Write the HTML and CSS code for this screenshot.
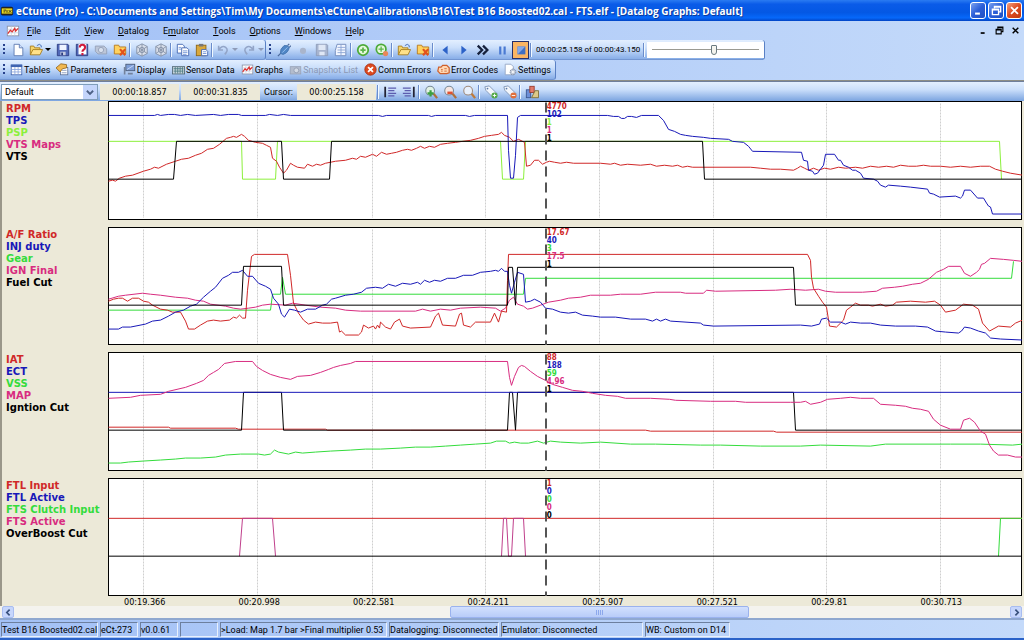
FILE: index.html
```html
<!DOCTYPE html>
<html lang="en">
<head>
    <meta charset="UTF-8">
    <meta name="viewport" content="width=device-width, initial-scale=1.0">
    <title>eCtune (Pro)</title>
    <link rel="stylesheet" href="styles.css">
</head>
<body>

<!-- icon set -->
<svg class="sprite" aria-hidden="true">
  <symbol id="i-app" viewBox="0 0 16 16"><rect x="1" y="3" width="14" height="10" rx="2" fill="#222"/><rect x="2" y="5" width="12" height="6" fill="#e8d820"/><path d="M4 7h3M4 9h2M8 7v3M10 7l3 3M13 7l-3 3" stroke="#222"/></symbol>
  <symbol id="i-chart" viewBox="0 0 16 16"><rect x="1.500" y="2.500" width="13" height="11" fill="#fff" stroke="#8a93a8"/><path d="M2 6h12M2 10h12M6 3v10M10 3v10" stroke="#cfd6e4"/><path d="M2 11l3-4 2 2 3-4 1 3 3-3" fill="none" stroke="#d33" stroke-width="1.500"/></symbol>
  <symbol id="i-new" viewBox="0 0 16 16"><path d="M3.500 1.500h6l4 4v9h-10z" fill="#fff" stroke="#5a78b0"/><path d="M9.500 1.500v4h4" fill="#cfe0ff" stroke="#5a78b0"/></symbol>
  <symbol id="i-open" viewBox="0 0 16 16"><path d="M1.500 13.500v-10h4l1 2h6v2" fill="#f6d46a" stroke="#a67c1c"/><path d="M1.500 13.500l3-6h11l-3 6z" fill="#ffe28a" stroke="#a67c1c"/><path d="M9 3q3-3 5 0v2" fill="none" stroke="#3a66b0"/></symbol>
  <symbol id="i-save" viewBox="0 0 16 16"><path d="M1.500 1.500h12l1 1v12h-13z" fill="#5068b8" stroke="#2b3c80"/><rect x="4" y="2" width="8" height="6" fill="#eef3ff"/><rect x="5" y="10" width="6" height="4" fill="#c4cbe0"/><rect x="6" y="11" width="2" height="3" fill="#2b3c80"/></symbol>
  <symbol id="i-saveoff" viewBox="0 0 16 16"><path d="M1.500 1.500h12l1 1v12h-13z" fill="#a7b4cf" stroke="#8e9bb8"/><rect x="4" y="2" width="8" height="6" fill="#dfe7f5"/><rect x="5" y="10" width="6" height="4" fill="#dfe7f5"/></symbol>
  <symbol id="i-saveas" viewBox="0 0 16 16"><path d="M1.500 1.500h13v13h-13z" fill="#5068b8" stroke="#2b3c80"/><rect x="4" y="1" width="9" height="12" fill="#fff"/><path d="M5.500 5q0-3 3-3t3 3q0 1.500-1.500 2.500T8.500 10M8.500 11.500v2.500" fill="none" stroke="#d01c3c" stroke-width="2.400"/></symbol>
  <symbol id="i-upload" viewBox="0 0 16 16"><path d="M1.500 3.500h10l3 3v6h-10l-3-3z" fill="#bcc6d8" stroke="#93a0b8"/><circle cx="8" cy="8" r="3" fill="#d8e0ee" stroke="#93a0b8"/></symbol>
  <symbol id="i-close" viewBox="0 0 16 16"><path d="M1.500 12.500v-10h5l1 2h7v8z" fill="#ffd25e" stroke="#b5761a"/><path d="M8 7l6 7M14 7l-6 7" stroke="#e2521c" stroke-width="2.500"/></symbol>
  <symbol id="i-wheel" viewBox="0 0 16 16"><path d="M8 1l6 3v8l-6 3-6-3V4z" fill="#d9dfea" stroke="#8490a6"/><circle cx="8" cy="8" r="3" fill="none" stroke="#8490a6"/><path d="M8 1v14M2 4l12 8M14 4L2 12" stroke="#8490a6"/></symbol>
  <symbol id="i-copy" viewBox="0 0 16 16"><path d="M1.500 1.500h6l2 2v8h-8z" fill="#fff" stroke="#3f64b0"/><path d="M6.500 5.500h6l2 2v7h-8z" fill="#fff" stroke="#3f64b0"/><path d="M3 5h3M3 7h3M8 9h5M8 11h5M8 13h4" stroke="#6f92d6"/></symbol>
  <symbol id="i-paste" viewBox="0 0 16 16"><rect x="1.500" y="2.500" width="11" height="12" fill="#d9a83c" stroke="#8c6414"/><rect x="4.500" y="1" width="5" height="3" fill="#777"/><path d="M7.500 7.500h5l2 2v5h-7z" fill="#fff" stroke="#3f64b0"/><path d="M9 10h4M9 12h4" stroke="#6f92d6"/></symbol>
  <symbol id="i-undo" viewBox="0 0 16 16"><path d="M3 3v5h5M3 8q4-6 8-3t-1 8" fill="none" stroke="#93a5c8" stroke-width="1.800"/></symbol>
  <symbol id="i-redo" viewBox="0 0 16 16"><path d="M13 3v5H8M13 8Q9 2 5 5t1 8" fill="none" stroke="#93a5c8" stroke-width="1.800"/></symbol>
  <symbol id="i-plug" viewBox="0 0 16 16"><path d="M1 15l4-4M12 3l2-2M14 5l2-2" stroke="#4c6a9c" stroke-width="1.500"/><path d="M4 12Q3 7 8 3q4-1 6 2-1 6-7 8z" fill="#4f86c6" stroke="#4474ae"/><path d="M6 11l6-6" stroke="#9cc4f0"/></symbol>
  <symbol id="i-dot" viewBox="0 0 16 16"><circle cx="8" cy="9" r="3.500" fill="#a9b5cc"/></symbol>
  <symbol id="i-sheet" viewBox="0 0 16 16"><path d="M3.500 1.500h10v13h-12v-6z" fill="#f2f6ff" stroke="#6b86b8"/><path d="M4 5h9M4 8h9M4 11h9M8 2v12" stroke="#8aa4d4"/></symbol>
  <symbol id="i-ring" viewBox="0 0 16 16"><circle cx="8" cy="8" r="6" fill="#e6f8dc" stroke="#4caa38" stroke-width="2"/><path d="M8 5v6M5 8h6" stroke="#5cb44a" stroke-width="2"/></symbol>
  <symbol id="i-ringx" viewBox="0 0 16 16"><circle cx="7" cy="7" r="5.500" fill="#e6f8dc" stroke="#4caa38" stroke-width="2"/><path d="M7 4v6M4 7h6" stroke="#5cb44a" stroke-width="1.500"/><circle cx="12" cy="12" r="3" fill="#e8875a"/></symbol>
  <symbol id="i-prev" viewBox="0 0 16 16"><path d="M11 3v10L5 8z" fill="#2c62c8"/></symbol>
  <symbol id="i-next" viewBox="0 0 16 16"><path d="M5 3v10l6-5z" fill="#2c62c8"/></symbol>
  <symbol id="i-ff" viewBox="0 0 16 16"><path d="M2 3l5 5-5 5M8 3l5 5-5 5" fill="none" stroke="#16213c" stroke-width="2.600"/></symbol>
  <symbol id="i-pause" viewBox="0 0 16 16"><path d="M6 4v9M11 4v9" stroke="#4a7ad2" stroke-width="2.500"/></symbol>
  <symbol id="i-stop" viewBox="0 0 16 16"><rect x="4" y="4" width="9" height="9" fill="#3e6fc4"/><path d="M4 4h9l-9 9z" fill="#86a8e6"/></symbol>
  <symbol id="i-table" viewBox="0 0 16 16"><rect x="1.500" y="2.500" width="13" height="12" fill="#fff" stroke="#3f64b0"/><rect x="1" y="2" width="14" height="3" fill="#3f64b0"/><path d="M2 8h12M2 11h12M6 5v9M10 5v9" stroke="#88a4dc"/></symbol>
  <symbol id="i-param" viewBox="0 0 16 16"><rect x="5.500" y="5.500" width="9" height="9" fill="#fff" stroke="#5b6f96"/><path d="M7 9h6M7 12h6" stroke="#7d90b6"/><path d="M0 6l6-5 7 1v4l-5 1-3 4z" fill="#f1b850" stroke="#93641a"/></symbol>
  <symbol id="i-display" viewBox="0 0 16 16"><rect x="3.500" y="1.500" width="11" height="8" fill="#7f9fd8" stroke="#44546e"/><path d="M5 8l8-5" stroke="#d5e4ff"/><path d="M6 12h6v2H6zM1 5h2v9H1z" fill="#73829c"/></symbol>
  <symbol id="i-sensor" viewBox="0 0 16 16"><rect x=".500" y="4.500" width="15" height="9" fill="#c8d4dc" stroke="#4c6470"/><path d="M2 7h12M2 10h12M4 5v8M7 5v8M10 5v8M13 5v8" stroke="#4a7a80"/></symbol>
  <symbol id="i-camera" viewBox="0 0 16 16"><rect x="1.500" y="4.500" width="13" height="9" fill="#b3bccd" stroke="#98a3b8"/><circle cx="9" cy="9" r="3" fill="#d3dae6" stroke="#8f9ab0"/></symbol>
  <symbol id="i-error" viewBox="0 0 16 16"><circle cx="8" cy="8" r="7" fill="#dd4a20" stroke="#a42c10"/><path d="M5 5l6 6M11 5l-6 6" stroke="#fff" stroke-width="2.200"/></symbol>
  <symbol id="i-engine" viewBox="0 0 16 16"><path d="M2 5h3l2-2h5l3 3v6l-3 1H4l-3-3z" fill="#ffd8b4" stroke="#d0602a" stroke-width="1.500"/><path d="M5 8h2M5 10h2M9 7h3M9 10h3" stroke="#d0602a"/></symbol>
  <symbol id="i-gear" viewBox="0 0 16 16"><path d="M1.500 1.500h7l3 3v10h-10z" fill="#fff" stroke="#8fa0c0"/><circle cx="11" cy="11" r="3.500" fill="#c4ccda" stroke="#6c7a94" stroke-dasharray="2 1"/><circle cx="11" cy="11" r="1.200" fill="#fff"/></symbol>
  <symbol id="i-left" viewBox="0 0 16 16"><path d="M2.500 2v12" stroke="#223" stroke-width="2"/><path d="M6 3.500h9M6 6.500h7M6 9.500h9M6 12.500h7" stroke="#5c5cae" stroke-width="1.500"/></symbol>
  <symbol id="i-right" viewBox="0 0 16 16"><path d="M13.500 2v12" stroke="#223" stroke-width="2"/><path d="M1 3.500h9M3 6.500h7M1 9.500h9M3 12.500h7" stroke="#5c5cae" stroke-width="1.500"/></symbol>
  <symbol id="i-zoomin" viewBox="0 0 16 16"><circle cx="7" cy="6.500" r="5" fill="#e2f2e6" stroke="#7a8a96" stroke-width="1.200"/><path d="M11 10l4 5" stroke="#b0703a" stroke-width="2.500"/><path d="M7.500 6v7M4 9.500h7" stroke="#3aa040" stroke-width="2.500"/></symbol>
  <symbol id="i-zoomout" viewBox="0 0 16 16"><circle cx="7" cy="6.500" r="5" fill="#f6e6e2" stroke="#7a8a96" stroke-width="1.200"/><path d="M11 10l4 5" stroke="#b0703a" stroke-width="2.500"/><path d="M5 9h6" stroke="#e05030" stroke-width="3"/></symbol>
  <symbol id="i-zoom" viewBox="0 0 16 16"><circle cx="7" cy="6.500" r="5" fill="#e8f0fc" stroke="#a08a7a" stroke-width="1.200"/><path d="M11 10l4 5" stroke="#c07a3a" stroke-width="2.500"/></symbol>
  <symbol id="i-tagadd" viewBox="0 0 16 16"><path d="M1 2l5-1 9 9-5 4-8-8z" fill="#f2f6fc" stroke="#7f93b4"/><circle cx="4" cy="4" r="1" fill="#5878a8"/><circle cx="12" cy="12" r="3.500" fill="#54a848"/><path d="M12 10v4M10 12h4" stroke="#fff"/></symbol>
  <symbol id="i-tagdel" viewBox="0 0 16 16"><path d="M1 2l5-1 9 9-5 4-8-8z" fill="#f2f6fc" stroke="#7f93b4"/><circle cx="4" cy="4" r="1" fill="#5878a8"/><circle cx="12" cy="12" r="3.500" fill="#e0703c"/><path d="M10 12h4" stroke="#fff"/></symbol>
  <symbol id="i-shapes" viewBox="0 0 16 16"><rect x="1.500" y="5.500" width="5" height="9" fill="#6c8fd8" stroke="#39558e"/><rect x="5.500" y="1.500" width="5" height="7" fill="#e07a6a" stroke="#9a3a2c"/><path d="M7.500 14.500l4-8h4v8z" fill="#dcc988" stroke="#7a6a30"/></symbol>
  <symbol id="i-restore" viewBox="0 0 16 16"><path d="M5 5V2h9v8h-3M5 3h9" fill="none" stroke="currentColor" stroke-width="2"/><path d="M2 6h9v8H2zM2 7h9" fill="none" stroke="currentColor" stroke-width="2"/></symbol>
  <symbol id="i-min" viewBox="0 0 16 16"><path d="M3 12.500h7" stroke="currentColor" stroke-width="3"/></symbol>
  <symbol id="i-x" viewBox="0 0 16 16"><path d="M3 3l10 10M13 3L3 13" stroke="currentColor" stroke-width="2.600"/></symbol>
  <symbol id="i-chevl" viewBox="0 0 16 16"><path d="M10 3L5 8l5 5" fill="none" stroke="currentColor" stroke-width="3"/></symbol>
  <symbol id="i-chevr" viewBox="0 0 16 16"><path d="M6 3l5 5-5 5" fill="none" stroke="currentColor" stroke-width="3"/></symbol>
  <symbol id="i-chevd" viewBox="0 0 16 16"><path d="M3 6l5 5 5-5" fill="none" stroke="currentColor" stroke-width="3"/></symbol>
</svg>

<div class="window">

  <header class="titlebar">
    <svg class="icon"><use href="#i-app"/></svg>
    <h1>eCtune (Pro) - C:\Documents and Settings\Tim\My Documents\eCtune\Calibrations\B16\Test B16 Boosted02.cal - FTS.elf - [Datalog Graphs: Default]</h1>
    <button class="winbtn" aria-label="Minimize"><svg class="icon"><use href="#i-min"/></svg></button>
    <button class="winbtn" aria-label="Restore"><svg class="icon"><use href="#i-restore"/></svg></button>
    <button class="winbtn winbtn-close" aria-label="Close"><svg class="icon"><use href="#i-x"/></svg></button>
  </header>

  <div class="bars">
    <nav class="menubar">
      <svg class="icon"><use href="#i-chart"/></svg>
      <button><u>F</u>ile</button>
      <button><u>E</u>dit</button>
      <button><u>V</u>iew</button>
      <button><u>D</u>atalog</button>
      <button>E<u>m</u>ulator</button>
      <button><u>T</u>ools</button>
      <button><u>O</u>ptions</button>
      <button><u>W</u>indows</button>
      <button><u>H</u>elp</button>
      <div class="childbtns">
        <button aria-label="Minimize child"><svg class="icon-s"><use href="#i-min"/></svg></button>
        <button aria-label="Restore child"><svg class="icon-s"><use href="#i-restore"/></svg></button>
        <button aria-label="Close child"><svg class="icon-s"><use href="#i-x"/></svg></button>
      </div>
    </nav>

    <div class="row">
      <div class="toolbar">
        <i class="grip"></i>
        <button class="tool" aria-label="New"><svg class="icon"><use href="#i-new"/></svg></button>
        <button class="tool split" aria-label="Open"><svg class="icon"><use href="#i-open"/></svg><i class="caret"></i></button>
        <button class="tool" aria-label="Save"><svg class="icon"><use href="#i-save"/></svg></button>
        <button class="tool" aria-label="Save as"><svg class="icon"><use href="#i-saveas"/></svg></button>
        <button class="tool" aria-label="Upload" disabled><svg class="icon"><use href="#i-upload"/></svg></button>
        <button class="tool" aria-label="Close file"><svg class="icon"><use href="#i-close"/></svg></button>
        <i class="sep"></i>
        <button class="tool" aria-label="Table up"><svg class="icon"><use href="#i-wheel"/></svg></button>
        <button class="tool" aria-label="Table down"><svg class="icon"><use href="#i-wheel"/></svg></button>
        <i class="sep"></i>
        <button class="tool" aria-label="Copy"><svg class="icon"><use href="#i-copy"/></svg></button>
        <button class="tool" aria-label="Paste"><svg class="icon"><use href="#i-paste"/></svg></button>
        <i class="sep"></i>
        <button class="tool split" aria-label="Undo" disabled><svg class="icon"><use href="#i-undo"/></svg><i class="caret"></i></button>
        <button class="tool split" aria-label="Redo" disabled><svg class="icon"><use href="#i-redo"/></svg><i class="caret"></i></button>
      </div>
      <div class="toolbar">
        <i class="grip"></i>
        <button class="tool" aria-label="Connect"><svg class="icon"><use href="#i-plug"/></svg></button>
        <button class="tool" aria-label="Record" disabled><svg class="icon"><use href="#i-dot"/></svg></button>
        <button class="tool" aria-label="Save log" disabled><svg class="icon"><use href="#i-saveoff"/></svg></button>
        <button class="tool" aria-label="Log sheet"><svg class="icon"><use href="#i-sheet"/></svg></button>
        <i class="sep"></i>
        <button class="tool" aria-label="Start"><svg class="icon"><use href="#i-ring"/></svg></button>
        <button class="tool" aria-label="Clear"><svg class="icon"><use href="#i-ringx"/></svg></button>
        <i class="sep"></i>
        <button class="tool" aria-label="Open log"><svg class="icon"><use href="#i-open"/></svg></button>
        <button class="tool" aria-label="Close log"><svg class="icon"><use href="#i-close"/></svg></button>
        <i class="sep"></i>
        <button class="tool" aria-label="Back"><svg class="icon"><use href="#i-prev"/></svg></button>
        <button class="tool" aria-label="Play"><svg class="icon"><use href="#i-next"/></svg></button>
        <button class="tool" aria-label="Fast forward"><svg class="icon"><use href="#i-ff"/></svg></button>
        <button class="tool" aria-label="Pause"><svg class="icon"><use href="#i-pause"/></svg></button>
        <button class="tool active" aria-label="Stop"><svg class="icon"><use href="#i-stop"/></svg></button>
        <i class="sep"></i>
        <span class="playtime">00:00:25.158 of 00:00:43.150</span>
        <i class="sep"></i>
        <input class="seek" type="range" min="0" max="43150" value="25158" aria-label="Playback position">
      </div>
    </div>

    <div class="row">
      <div class="toolbar labelled">
        <i class="grip"></i>
        <button><svg class="icon"><use href="#i-table"/></svg>Tables</button>
        <button><svg class="icon"><use href="#i-param"/></svg>Parameters</button>
        <button><svg class="icon"><use href="#i-display"/></svg>Display</button>
        <button><svg class="icon"><use href="#i-sensor"/></svg>Sensor Data</button>
        <button><svg class="icon"><use href="#i-chart"/></svg>Graphs</button>
        <button disabled><svg class="icon"><use href="#i-camera"/></svg>Snapshot List</button>
        <button><svg class="icon"><use href="#i-error"/></svg>Comm Errors</button>
        <button><svg class="icon"><use href="#i-engine"/></svg>Error Codes</button>
        <button><svg class="icon"><use href="#i-gear"/></svg>Settings</button>
      </div>
    </div>
  </div>

  <div class="graphbar">
    <label class="picker">
      <select aria-label="Graph layout"><option>Default</option></select>
      <svg class="icon"><use href="#i-chevd"/></svg>
    </label>
    <output>00:00:18.857</output>
    <output>00:00:31.835</output>
    <span class="cursor-label">Cursor:</span>
    <output>00:00:25.158</output>
    <i class="sep"></i>
    <button class="tool" aria-label="Set start"><svg class="icon"><use href="#i-left"/></svg></button>
    <button class="tool" aria-label="Set end"><svg class="icon"><use href="#i-right"/></svg></button>
    <i class="sep"></i>
    <button class="tool" aria-label="Zoom in"><svg class="icon"><use href="#i-zoomin"/></svg></button>
    <button class="tool" aria-label="Zoom out"><svg class="icon"><use href="#i-zoomout"/></svg></button>
    <button class="tool" aria-label="Zoom all"><svg class="icon"><use href="#i-zoom"/></svg></button>
    <i class="sep"></i>
    <button class="tool" aria-label="Add tag"><svg class="icon"><use href="#i-tagadd"/></svg></button>
    <button class="tool" aria-label="Remove tag"><svg class="icon"><use href="#i-tagdel"/></svg></button>
    <i class="sep"></i>
    <button class="tool" aria-label="Graph options"><svg class="icon"><use href="#i-shapes"/></svg></button>
  </div>

  <main class="graphs">

    <section class="graph">
      <ul class="legend">
        <li class="red">RPM</li><li class="blue">TPS</li><li class="lime">PSP</li><li class="pink">VTS Maps</li><li class="black">VTS</li>
      </ul>
      <div class="plot">
        <svg viewBox="107.500 100.500 914 119" preserveAspectRatio="none">
          <path class="gridlines" d="M143 103V218M257 103V218M372 103V218M485 103V218M599 103V218M713 103V218M826 103V218M940 103V218"/>
          <polyline class="lime" points="108,141 241,141 242,179 275,179 277,141 500,141 502,179 523,179 525,141 999,141 1001,179"/>
          <polyline class="red" points="108,181 112,180 115,181 119,178 125,176 132,175 143,171 150,169 154,167 158,168 166,164 175,161 181,159 188,158 195,155 201,153 207,149 213,148 219,144 226,138 230,137 233,136 236,137 241,134 244,136 248,140 255,142 262,143 266,145 270,147 272,158 276,161 279,167 283,173 286,170 290,163 293,165 297,167 304,168 307,164 312,166 316,164 320,165 325,163 335,161 345,160 352,158 356,159 360,156 365,157 372,154 376,156 381,152 386,154 391,153 396,152 402,150 407,149 411,150 416,148 420,146 424,148 429,146 434,147 440,144 447,143 455,142 462,141 470,140 478,138 484,136 491,135 498,134 501,132 504,135 509,137 513,141 518,139 524,142 526,166 530,165 534,160 538,160 542,164 546,162 549,161 554,162 560,163 566,162 573,163 600,163 610,164 614,163 620,165 627,164 640,165 650,164 656,166 664,165 672,166 677,165 682,167 687,166 692,167 750,167 760,168 770,169 780,169 793,170 797,168 800,166 804,168 808,170 813,168 818,170 824,168 830,169 838,167 845,168 855,167 862,168 870,166 878,167 886,166 893,167 900,165 908,166 916,166 923,165 930,166 940,166 950,167 960,166 970,167 980,166 989,166 995,169 1002,171 1010,173 1022,175"/>
          <polyline class="blue" points="108,115 154,115 157,114 160,115 168,114 174,114 180,115 187,114 195,115 213,114 220,115 228,114 238,114 241,115 265,115 269,114 277,115 283,114 290,115 378,115 382,116 386,115 428,115 431,116 435,115 465,115 469,116 474,115 507,115 508,150 510,178 513,178 515,155 517,117 520,115 607,115 613,116 618,116 621,118 624,118 627,116 631,116 636,117 641,115 658,115 663,120 668,129 674,131 680,134 685,135 692,136 703,137 710,138 728,139 732,141 743,142 748,146 752,151 801,152 803,160 807,161 808,170 812,171 814,174 817,173 820,169 823,165 825,154 834,154 838,160 840,160 843,165 848,167 852,170 855,170 860,173 863,178 873,179 877,181 880,185 885,187 888,185 900,186 910,187 927,189 929,193 933,194 939,197 955,196 960,198 962,196 964,190 970,190 977,198 983,198 986,203 988,206 990,207 992,214 1022,214"/>
          <polyline class="black" points="108,179 173,179 176,141 281,141 283,179 329,179 331,141 702,141 704,179 1022,179"/>
          <path class="cursor" d="M545.500 102V219"/>
        </svg>
        <ul class="readout">
          <li class="red">4770</li><li class="blue">102</li><li class="lime">1</li><li class="pink">1</li><li class="black">1</li>
        </ul>
      </div>
    </section>

    <section class="graph">
      <ul class="legend">
        <li class="red">A/F Ratio</li><li class="blue">INJ duty</li><li class="green">Gear</li><li class="pink">IGN Final</li><li class="black">Fuel Cut</li>
      </ul>
      <div class="plot">
        <svg viewBox="107.500 226.500 914 119" preserveAspectRatio="none">
          <path class="gridlines" d="M143 229V344M257 229V344M372 229V344M485 229V344M599 229V344M713 229V344M826 229V344M940 229V344"/>
          <polyline class="green" points="108,310 270,310 272,294 280,294 282,277 285,294 523,294 525,278 1011,278 1013,261"/>
          <polyline class="pink" points="108,299 118,296 125,295 142,293 150,294 160,295 175,297 187,298 195,300 203,301 210,304 225,306 233,308 240,309 248,308 255,307 262,305 270,304 285,305 292,303 305,305 320,307 335,308 345,310 360,311 415,311 422,309 430,311 440,309 450,310 460,308 480,307 495,308 500,311 505,308 509,300 513,297 517,304 523,306 527,309 532,308 540,305 548,302 560,300 568,298 580,297 590,295 610,295 620,294 640,294 655,292 680,292 685,293 703,293 706,290 715,291 775,290 790,289 805,290 818,289 825,291 835,292 862,292 876,291 882,288 894,287 902,286 912,284 920,283 928,279 936,272 943,269 948,266 960,266 964,273 970,276 976,272 979,269 981,264 984,263 990,258 1003,259 1013,260 1022,261"/>
          <polyline class="red" points="108,301 113,299 118,298 122,298 127,301 132,298 138,298 143,301 148,302 152,305 160,309 167,310 172,312 180,312 185,321 188,329 194,329 200,325 207,321 213,320 220,321 229,320 233,317 236,318 239,315 242,318 245,318 247,290 251,256 254,254 287,254 290,275 293,303 298,313 303,320 308,324 315,322 322,323 330,323 337,322 339,332 341,331 345,335 358,335 361,332 363,325 368,328 373,326 375,329 377,325 379,328 380,322 385,327 390,329 394,322 399,319 402,326 410,328 430,327 435,316 438,313 442,325 455,326 459,314 461,313 463,325 470,327 475,322 490,322 494,313 498,322 501,311 506,312 507,280 508,254 807,254 810,260 811,277 813,288 818,296 822,302 826,307 829,326 836,327 843,320 846,310 850,307 855,303 860,305 868,305 872,306 880,304 885,306 892,305 896,302 910,301 925,302 934,301 940,305 945,312 955,310 963,304 972,305 978,309 982,323 989,331 998,326 1010,327 1015,323 1022,320"/>
          <polyline class="blue" points="108,329 118,329 122,327 130,327 145,324 152,321 160,320 168,316 175,312 183,310 190,306 196,304 203,297 210,291 215,287 222,278 228,275 232,272 238,272 242,270 247,276 252,276 258,283 265,286 270,289 273,298 278,304 281,314 284,317 289,309 294,310 300,312 307,309 315,309 322,305 326,304 331,299 335,298 345,295 353,294 361,292 366,288 375,287 382,288 388,284 395,286 402,283 410,284 417,282 420,284 424,280 429,282 434,280 440,281 447,278 455,278 463,275 472,275 480,272 490,271 495,270 498,271 501,268 504,271 507,271 509,285 511,293 514,282 517,272 523,274 525,302 530,301 534,299 540,302 545,308 552,309 560,312 568,313 575,312 582,315 592,316 600,317 615,317 630,319 645,319 652,321 656,319 660,321 665,319 670,321 700,323 703,325 713,326 800,325 811,326 819,324 821,319 826,318 830,322 840,322 845,324 850,322 860,323 870,323 880,325 895,326 915,326 927,327 935,331 945,332 958,333 961,331 964,327 970,328 978,331 985,333 990,338 1000,339 1022,340"/>
          <polyline class="black" points="108,305 241,305 243,266 281,266 283,305 507,305 508,267 512,267 515,305 517,267 793,267 795,305 1022,305"/>
          <path class="cursor" d="M545.500 228V345"/>
        </svg>
        <ul class="readout">
          <li class="red">17.67</li><li class="blue">40</li><li class="green">3</li><li class="pink">17.5</li><li class="black">1</li>
        </ul>
      </div>
    </section>

    <section class="graph">
      <ul class="legend">
        <li class="red">IAT</li><li class="blue">ECT</li><li class="green">VSS</li><li class="pink">MAP</li><li class="black">Igntion Cut</li>
      </ul>
      <div class="plot">
        <svg viewBox="107.500 351.500 914 119" preserveAspectRatio="none">
          <path class="gridlines" d="M143 355V469M257 355V469M372 355V469M485 355V469M599 355V469M713 355V469M826 355V469M940 355V469"/>
          <polyline class="green" points="108,463 120,463 128,462 143,461 160,460 175,459 185,458 200,458 215,457 225,455 240,454 258,454 264,455 270,454 274,450 278,452 288,454 295,452 302,453 315,452 330,451 350,450 365,449 380,449 400,448 415,447 430,447 445,446 460,445 475,444 490,443 496,441 505,441 509,443 514,442 520,443 528,443 537,441 543,443 550,441 560,442 580,443 600,442 630,444 655,444 700,445 720,445 760,446 800,446 820,445 870,446 885,444 950,444 980,444 1012,445 1022,444"/>
          <polyline class="red" points="108,427 168,427 170,428 235,428 238,429 325,429 327,430 410,430 645,430 650,431 773,431 776,432 1022,432"/>
          <polyline class="black" points="108,430 241,430 243,392 281,392 283,430 507,430 509,392 512,392 515,430 517,392 793,392 795,430 1022,430"/>
          <polyline class="blue" points="108,392 1022,392"/>
          <polyline class="pink" points="108,398 130,397 140,395 160,394 168,391 185,387 196,383 203,380 208,375 213,372 218,369 221,366 224,363 235,361 252,361 256,366 262,370 270,374 280,377 290,379 297,376 310,375 320,372 328,369 333,367 340,365 350,363 355,361 507,361 509,377 511,385 514,376 518,367 521,365 524,366 530,371 537,376 545,380 552,384 562,387 572,390 582,391 592,393 605,395 617,396 625,398 650,398 669,399 675,400 710,401 735,401 745,402 790,402 800,402 805,401 810,404 820,402 827,399 840,398 850,397 860,398 873,398 880,404 895,405 905,406 912,408 920,409 928,411 933,419 940,425 950,429 960,429 963,420 969,418 974,422 980,431 985,434 989,445 993,451 998,455 1007,455 1015,457 1022,457"/>
          <path class="cursor" d="M545.500 354V471"/>
        </svg>
        <ul class="readout">
          <li class="red">88</li><li class="blue">188</li><li class="green">59</li><li class="pink">4.96</li><li class="black">1</li>
        </ul>
      </div>
    </section>

    <section class="graph">
      <ul class="legend">
        <li class="red">FTL Input</li><li class="blue">FTL Active</li><li class="green">FTS Clutch Input</li><li class="pink">FTS Active</li><li class="black">OverBoost Cut</li>
      </ul>
      <div class="plot">
        <svg viewBox="107.500 477.500 914 119" preserveAspectRatio="none">
          <path class="gridlines" d="M143 480V595M257 480V595M372 480V595M485 480V595M599 480V595M713 480V595M826 480V595M940 480V595"/>
          <polyline class="red" points="108,518 1022,518"/>
          <polyline class="violet" points="239,556 242,518 272,518 275,556"/>
          <polyline class="violet" points="501,556 503,518 506,518 508,556 511,556 513,518 523,518 525,556"/>
          <polyline class="green" points="998,556 1000,518 1022,518"/>
          <polyline class="black" points="108,556 1022,556"/>
          <path class="cursor" d="M545.500 479V596"/>
        </svg>
        <ul class="readout">
          <li class="red">1</li><li class="blue">0</li><li class="green">0</li><li class="pink">0</li><li class="black">0</li>
        </ul>
      </div>
    </section>
  </main>

  <div class="axis">
    <span>00:19.366</span><span>00:20.998</span><span>00:22.581</span><span>00:24.211</span><span>00:25.907</span><span>00:27.521</span><span>00:29.81</span><span>00:30.713</span>
  </div>

  <div class="scrollbar">
    <button aria-label="Scroll left"><svg class="icon-s"><use href="#i-chevl"/></svg></button>
    <div class="track"><div class="thumb"></div></div>
    <button aria-label="Scroll right"><svg class="icon-s"><use href="#i-chevr"/></svg></button>
  </div>

  <footer class="statusbar">
    <span class="s-file">Test B16 Boosted02.cal</span>
    <span class="s-short">eCt-273</span>
    <span class="s-short">v0.0.61</span>
    <span class="s-short"></span>
    <span class="s-load">&gt;Load: Map 1.7 bar &gt;Final multiplier 0.53</span>
    <span class="s-log">Datalogging: Disconnected</span>
    <span class="s-emu">Emulator: Disconnected</span>
    <span class="s-wb">WB: Custom on D14</span>
  </footer>

</div>

</body>
</html>
```
FILE: styles.css
```css
* {
  box-sizing: border-box;
}

body {
  margin: 0;
  font-family: Roboto, sans-serif;
  font-size: 9px;
  color: #000;
}

button {
  display: flex;
  align-items: center;
  justify-content: center;
  padding: 0;
  border: 0;
  background: none;
  font: inherit;
  color: inherit;
  white-space: nowrap;
}

ul {
  margin: 0;
  padding: 0;
  list-style: none;
}

.sprite {
  position: absolute;
  width: 0;
  height: 0;
}

.icon {
  width: 14px;
  height: 14px;
  flex: none;
}

.icon-s {
  width: 9px;
  height: 9px;
}

.window {
  display: flex;
  flex-direction: column;
  height: 100vh;
  overflow: hidden;
  background: #ece9d8;
  border-bottom: 2px solid #2a62c8;
}

/* title bar */
.titlebar {
  display: flex;
  align-items: center;
  gap: 2px;
  height: 21px;
  padding: 0 2px 0 0;
  background: linear-gradient(#2a7bf2, #0a5be8 20%, #0458e4 60%, #0668fa 85%, #0244c4);
  color: #fff;
}

.titlebar h1 {
  flex: 1;
  margin: 0;
  font-family: "Open Sans", sans-serif;
  font-size: 10px;
  font-weight: 700;
  white-space: nowrap;
  text-shadow: 1px 1px 0 #0a3a9c;
}

.winbtn {
  width: 16px;
  height: 17px;
  border: 1px solid #fff;
  border-radius: 3px;
  background: linear-gradient(135deg, #7ba2f0, #2a5ed8 50%, #2050c0);
}

.winbtn .icon {
  width: 11px;
  height: 11px;
}

.winbtn-close {
  background: linear-gradient(135deg, #f0a080, #dc4a20 50%, #c03a10);
}

/* menus and toolbars */
.bars {
  background: linear-gradient(90deg, #a3c1f6, #c4dafa);
  border-bottom: 1px solid #8d8d85;
}

.menubar {
  display: flex;
  align-items: center;
  gap: 14px;
  height: 19px;
  padding: 0 4px 0 6px;
}

.menubar > .icon {
  margin-right: -7px;
}

.childbtns {
  display: flex;
  gap: 7px;
  margin-left: auto;
}

.row {
  display: flex;
  height: 20px;
}

.toolbar {
  display: flex;
  align-items: center;
  gap: 2px;
  padding-left: 2px;
  border-radius: 0 3px 3px 0;
  background: linear-gradient(#e3efff, #cbdffb 40%, #88aee8);
  border-right: 1px solid #5a80c4;
  border-bottom: 1px solid #7396d2;
}

.grip {
  width: 2px;
  height: 12px;
  margin: 0 2px 0 1px;
  background: repeating-linear-gradient(#27418c 0 2px, transparent 2px 4px);
}

.sep {
  flex: none;
  width: 2px;
  height: 14px;
  margin-left: -1px;
  border-left: 1px solid #6a8ccb;
  border-right: 1px solid #f1f9ff;
}

.tool {
  flex: none;
  width: 17px;
  height: 18px;
}

.split {
  width: 24px;
  gap: 2px;
}

.caret {
  border: 3px solid transparent;
  border-top-color: #000;
  border-bottom: 0;
}

.tool:disabled .caret {
  border-top-color: #8e9bb8;
}

.active {
  border: 1px solid #26306a;
  background: #fbb562;
}

.playtime {
  padding: 0 2px;
  font-size: 8px;
}

.seek {
  appearance: none;
  width: 117px;
  height: 16px;
  margin: 0;
  padding: 0 5px;
  background: #fff;
}

.seek::-webkit-slider-runnable-track {
  height: 1px;
  background: #9a9a92;
}

.seek::-webkit-slider-thumb {
  appearance: none;
  width: 6px;
  height: 10px;
  margin-top: -4px;
  border: 1px solid #6a7a80;
  border-radius: 1px 1px 3px 3px;
  background: #f4f4ee;
}

.labelled {
  gap: 6px;
  padding-right: 4px;
}

.labelled .grip {
  margin-right: -1px;
}

.labelled .icon {
  width: 13px;
  height: 13px;
}

.labelled button {
  gap: 1px;
}

.labelled button:disabled {
  color: #8c99b4;
}

/* graph toolbar */
.graphbar {
  display: flex;
  align-items: center;
  gap: 2px;
  height: 20px;
  padding-left: 1px;
  background: linear-gradient(#e3efff, #cbdffb 40%, #7ba4e0);
  border-top: 1px solid #6f7f9c;
}

.picker {
  display: flex;
  align-items: center;
  width: 97px;
  height: 16px;
  background: #fff;
  border: 1px solid #7f9db9;
}

.picker select {
  flex: 1;
  appearance: none;
  padding: 0 3px;
  border: 0;
  background: none;
  font: inherit;
}

.picker .icon {
  padding: 2px;
  background: #c4d5fb;
  color: #4d6185;
}

.graphbar output {
  width: 79px;
  height: 16px;
  font-family: "DejaVu Sans Condensed", "DejaVu Sans", sans-serif;
  font-stretch: condensed;
  line-height: 16px;
  background: #ece9d8;
  text-align: center;
}

.cursor-label {
  width: 33px;
  text-align: center;
}

/* graphs */
.graphs {
  flex: 1;
  min-height: 0;
  display: grid;
  grid-template-rows: repeat(4, minmax(0, 1fr));
  gap: 7px;
  padding-right: 2px;
  border-left: 2px solid #9a978a;
}

.graph {
  display: grid;
  grid-template-columns: 106px 1fr;
  grid-template-rows: 100%;
}

.legend {
  padding: 2px 0 0 4px;
  font-family: "DejaVu Sans", sans-serif;
  font-size: 10px;
  font-weight: 700;
  line-height: 12px;
  white-space: nowrap;
}

.plot {
  position: relative;
  background: #fff;
  box-shadow: inset 0 0 0 1px #000;
}

.plot svg {
  display: block;
  width: 100%;
  height: 100%;
}

.plot polyline,
.plot path {
  fill: none;
  stroke: currentColor;
  vector-effect: non-scaling-stroke;
}

.plot .gridlines {
  color: #cfcfcf;
  stroke-dasharray: 2 1;
}

.plot .cursor {
  color: #555;
  stroke-width: 2;
  stroke-dasharray: 10 6;
}

.readout {
  position: absolute;
  top: 2px;
  left: 48%;
  font-family: "DejaVu Sans Condensed", "DejaVu Sans", sans-serif;
  font-stretch: condensed;
  font-size: 8px;
  font-weight: 700;
  line-height: 8px;
}

.red { color: #d02828; }
.blue { color: #1818b8; }
.lime { color: #8cf03c; }
.green { color: #34dc3c; }
.pink { color: #d82c80; }
.violet { color: #c0408c; }
.black { color: #000; }

.axis {
  display: flex;
  justify-content: space-between;
  height: 10px;
  padding: 0 62px 0 122px;
  font-family: "DejaVu Sans Condensed", "DejaVu Sans", sans-serif;
  font-stretch: condensed;
  line-height: 13px;
  border-left: 2px solid #9a978a;
}

/* scroll bar */
.scrollbar {
  display: flex;
  height: 12px;
  padding: 0 2px;
  background: #f4f3ee;
}

.scrollbar button {
  width: 12px;
  border: 1px solid #a8bdf0;
  border-radius: 2px;
  background: #c6d6fc;
  color: #38507c;
}

.track {
  flex: 1;
}

.thumb {
  width: 30%;
  height: 100%;
  margin-left: 43.750%;
  border: 1px solid #9ab2ee;
  border-radius: 2px;
  background:
    repeating-linear-gradient(90deg, #8ca8ec 0 1px, transparent 1px 2px) center / 7px 5px no-repeat,
    linear-gradient(#d2e0fe, #b8ccf8);
}

/* status bar */
.statusbar {
  display: flex;
  align-items: center;
  gap: 2px;
  height: 20px;
  padding: 1px 1px 0;
  background: linear-gradient(90deg, #a3c1f6, #c4dafa);
  border-top: 2px solid #8fa8d0;
}

.statusbar span {
  height: 15px;
  line-height: 14px;
  white-space: nowrap;
  border: 1px solid;
  border-color: #6c7f9e #e8f0fc #e8f0fc #6c7f9e;
}

.s-file { width: 97px; }
.s-short { width: 38px; }
.s-load { width: 167px; }
.s-log { width: 110px; }
.s-emu { width: 142px; }
.s-wb { width: 85px; }
```
